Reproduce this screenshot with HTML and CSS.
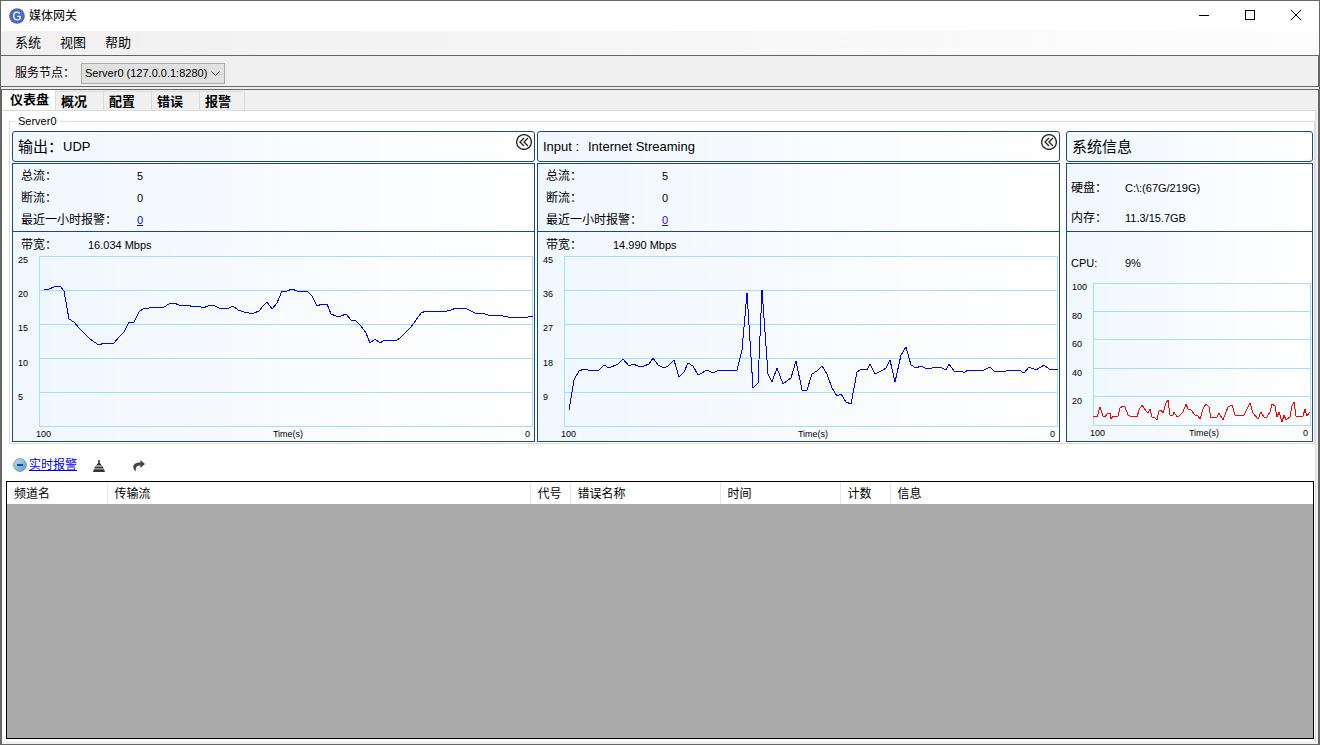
FILE: index.html
```html
<!DOCTYPE html>
<html lang="zh-CN">
<head>
    <meta charset="UTF-8">
    <meta name="viewport" content="width=device-width, initial-scale=1.0">
    <title>媒体网关</title>
    <link rel="stylesheet" href="styles.css">
</head>
<body>

    <header class="titlebar">
        <svg class="logo" viewBox="0 0 16 16">
            <circle cx="8" cy="8" r="7.8" fill="#4a6bc0"/>
            <path d="M10.900 5.600C10.200 4.600 9.200 4.200 8.200 4.200 6 4.200 4.700 5.800 4.700 8S6 11.800 8.200 11.800C9.400 11.800 10.400 11.400 11.100 10.800V8.400H8.400" fill="none" stroke="#fff" stroke-width="1.300"/>
        </svg>
        <h1>媒体网关</h1>
        <div class="window-buttons">
            <button aria-label="最小化"><svg viewBox="0 0 10 10"><path d="M0 5.5h10"/></svg></button>
            <button aria-label="最大化"><svg viewBox="0 0 10 10"><path d="M.5.5h9v9h-9z"/></svg></button>
            <button aria-label="关闭"><svg class="smooth" viewBox="0 0 10 10"><path d="M0 0l10 10M10 0L0 10"/></svg></button>
        </div>
    </header>

    <nav class="menu">
        <button>系统</button>
        <button>视图</button>
        <button>帮助</button>
    </nav>

    <div class="toolbar">
        <label for="node">服务节点：</label>
        <div class="select-box">
            <select id="node">
                <option>Server0 (127.0.0.1:8280)</option>
            </select>
            <svg viewBox="0 0 9 5"><path d="M.5.5l4 4 4-4"/></svg>
        </div>
    </div>

    <div class="workspace">
        <div class="tabs">
            <button class="tab active">仪表盘</button>
            <button class="tab">概况</button>
            <button class="tab">配置</button>
            <button class="tab">错误</button>
            <button class="tab">报警</button>
        </div>

        <main class="page">
            <fieldset class="server">
                <legend>Server0</legend>
                <div class="panels">

                    <section class="panel">
                        <div class="panel-head">
                            <h2>输出：</h2><span>UDP</span>
                            <button class="collapse" aria-label="收起">
                                <svg viewBox="0 0 16 16"><circle cx="8" cy="8" r="7.4"/><path d="M8 4L4 8l4 4M12 4L8 8l4 4"/></svg>
                            </button>
                        </div>
                        <div class="panel-body">
                            <div class="stats">
                                <div class="row"><span>总流：</span><span>5</span></div>
                                <div class="row"><span>断流：</span><span>0</span></div>
                                <div class="row"><span>最近一小时报警：</span><a href="#">0</a></div>
                            </div>
                            <div class="bandwidth"><span>带宽：</span><span>16.034 Mbps</span></div>
                            <div class="chart">
                                <div class="y-axis"><span>25</span><span>20</span><span>15</span><span>10</span><span>5</span></div>
                                <svg class="plot" viewBox="0 0 494 171" preserveAspectRatio="none">
                                    <path class="grid" d="M.5.5h493v170h-493zM0 34.5h494M0 68.5h494M0 102.5h494M0 136.5h494"/>
                                    <polyline class="line" points="5,34 10,33 15,31 21,30 25,35 30,63 35,66 40,72 45,77 50,82 55,86 60,89 65,87 70,88 75,87 80,81 85,76 90,66 95,66 100,56 105,52 110,52 115,51 125,51 130,48 135,47 140,49 149,49 154,51 160,50 164,52 169,50 174,49 180,52 185,53 190,52 194,50 199,54 205,56 210,57 215,57 220,55 224,50 228,46 233,53 238,47 243,35 248,35 253,33 258,35 263,36 268,35 273,40 278,50 283,48 288,48 292,58 297,60 302,60 307,58 312,64 317,65 322,70 327,77 331,87 336,83 341,87 346,84 352,84 357,85 362,81 372,71 377,64 382,57 387,55 392,55 397,56 402,55 408,55 412,54 417,52 422,53 426,52 432,55 436,57 443,57 449,59 459,59 469,61 489,61 494,60"/>
                                </svg>
                            </div>
                            <div class="x-axis"><span>100</span><span>Time(s)</span><span>0</span></div>
                        </div>
                    </section>

                    <section class="panel">
                        <div class="panel-head">
                            <h2>Input :</h2><span>Internet Streaming</span>
                            <button class="collapse" aria-label="收起">
                                <svg viewBox="0 0 16 16"><circle cx="8" cy="8" r="7.4"/><path d="M8 4L4 8l4 4M12 4L8 8l4 4"/></svg>
                            </button>
                        </div>
                        <div class="panel-body">
                            <div class="stats">
                                <div class="row"><span>总流：</span><span>5</span></div>
                                <div class="row"><span>断流：</span><span>0</span></div>
                                <div class="row"><span>最近一小时报警：</span><a class="seen" href="#">0</a></div>
                            </div>
                            <div class="bandwidth"><span>带宽：</span><span>14.990 Mbps</span></div>
                            <div class="chart">
                                <div class="y-axis"><span>45</span><span>36</span><span>27</span><span>18</span><span>9</span></div>
                                <svg class="plot" viewBox="0 0 494 171" preserveAspectRatio="none">
                                    <path class="grid" d="M.5.5h493v170h-493zM0 34.5h494M0 68.5h494M0 102.5h494M0 136.5h494"/>
                                    <polyline class="line" points="5,154 10,124 15,115 20,113 24,114 35,114 40,109 45,112 54,108 59,103 65,110 69,108 74,110 80,110 85,108 89,102 94,109 100,112 104,110 110,104 115,121 120,116 124,107 129,110 134,119 138,117 143,114 149,117 153,115 162,114 173,114 178,94 183,37 189,132 194,127 198,34 204,118 208,126 213,112 219,128 227,122 232,105 238,134 243,134 248,118 253,115 258,110 263,118 268,132 273,140 277,138 282,146 287,148 293,116 298,113 303,114 306,108 311,118 319,114 322,112 326,104 331,126 337,99 342,91 347,109 352,112 357,110 361,112 368,112 371,111 378,112 382,114 385,108 390,115 398,115 400,117 404,114 413,114 418,115 426,111 430,115 442,115 445,114 450,115 455,114 460,117 465,111 472,114 480,109 485,113 494,113"/>
                                </svg>
                            </div>
                            <div class="x-axis"><span>100</span><span>Time(s)</span><span>0</span></div>
                        </div>
                    </section>

                    <section class="panel system">
                        <div class="panel-head"><h2>系统信息</h2></div>
                        <div class="panel-body">
                            <div class="stats">
                                <div class="row"><span>硬盘：</span><span>C:\:(67G/219G)</span></div>
                                <div class="row"><span>内存：</span><span>11.3/15.7GB</span></div>
                            </div>
                            <div class="cpu row"><span>CPU:</span><span>9%</span></div>
                            <div class="chart">
                                <div class="y-axis"><span>100</span><span>80</span><span>60</span><span>40</span><span>20</span></div>
                                <svg class="plot" viewBox="0 0 218 143" preserveAspectRatio="none">
                                    <path class="grid" d="M.5.5h217v142h-217zM0 28.5h218M0 56.5h218M0 85.5h218M0 113.5h218"/>
                                    <polyline class="line red" points="0,133 4,134 7,124 10,133 12,134 15,130 17,130 18,136 20,133 25,133 27,125 30,123 32,124 35,132 39,134 41,133 44,134 46,127 49,122 53,128 55,130 57,126 59,134 62,135 64,137 66,128 68,127 70,130 73,120 75,117 77,132 80,132 81,129 84,134 86,133 90,129 93,121 95,126 98,127 102,132 105,133 107,136 110,126 113,121 116,124 118,135 120,134 124,134 126,130 130,137 133,129 135,124 139,122 142,132 151,132 154,126 157,120 160,130 165,136 168,129 171,134 174,134 177,129 179,121 182,123 184,134 186,129 189,139 191,132 193,137 197,134 199,123 201,119 203,133 210,133 212,126 214,133 217,129"/>
                                </svg>
                            </div>
                            <div class="x-axis"><span>100</span><span>Time(s)</span><span>0</span></div>
                        </div>
                    </section>

                </div>
            </fieldset>

            <div class="alarm-bar">
                <svg class="minus" viewBox="0 0 14 14">
                    <defs>
                        <linearGradient id="ball" x1="0" y1="0" x2="1" y2="1">
                            <stop offset="0" stop-color="#c9e2f5"/>
                            <stop offset="1" stop-color="#4d97d0"/>
                        </linearGradient>
                    </defs>
                    <circle cx="7" cy="7" r="6.4" fill="url(#ball)" stroke="#7f9db5"/>
                    <path d="M4 7h6" stroke="#0d4f8c" stroke-width="2"/>
                </svg>
                <a href="#">实时报警</a>
                <button aria-label="清除">
                    <svg viewBox="0 0 12 12"><path d="M5.2 0h1.6v3l2.4 2.6H2.8L5.2 3zM2.2 6.4h7.6l.9 2H1.3zM.9 9.2h10.2l.9 2.8H0z" fill="#333"/></svg>
                </button>
                <button aria-label="导出">
                    <svg viewBox="0 0 12 12"><path d="M7.4 0L12 4 7.4 8V5.6C4 5.4 2.3 7 2.8 11.6.2 9.4-.6 6.2 1.2 4.2 2.6 2.7 5 2.3 7.4 2.4z" fill="#444"/></svg>
                </button>
            </div>

            <div class="alarm-list">
                <table>
                    <colgroup>
                        <col class="c-name"><col class="c-stream"><col class="c-code"><col class="c-error"><col class="c-time"><col class="c-count"><col>
                    </colgroup>
                    <thead>
                        <tr><th>频道名</th><th>传输流</th><th>代号</th><th>错误名称</th><th>时间</th><th>计数</th><th>信息</th></tr>
                    </thead>
                </table>
            </div>
        </main>
    </div>

</body>
</html>
```

FILE: styles.css
```css
* {
    box-sizing: border-box;
}

body {
    margin: 0;
    min-height: 100vh;
    display: flex;
    flex-direction: column;
    border: 1px solid #666;
    background: #f0f0f0;
    color: #000;
    font-family: "Liberation Sans", "Noto Sans CJK SC", sans-serif;
    font-size: 12px;
    line-height: 16px;
}

button {
    padding: 0;
    border: none;
    background: none;
    color: inherit;
    font: inherit;
}

svg {
    display: block;
    fill: none;
    shape-rendering: crispEdges;
}

h1, h2 {
    margin: 0;
    font-weight: normal;
}

a {
    color: #00f;
}

/* title bar and menu */
.titlebar {
    height: 30px;
    display: flex;
    align-items: center;
    padding-left: 8px;
    background: #fff;
}

.logo {
    width: 16px;
    height: 16px;
    margin-right: 4px;
    shape-rendering: auto;
}

.titlebar h1 {
    font-size: 12px;
}

.window-buttons {
    display: flex;
    align-self: flex-start;
    margin-left: auto;
}

.window-buttons button {
    width: 46px;
    height: 28px;
    display: flex;
    align-items: center;
    justify-content: center;
}

.window-buttons svg {
    width: 10px;
    height: 10px;
    stroke: #000;
}

.window-buttons .smooth {
    shape-rendering: auto;
}

.menu {
    height: 24px;
    display: flex;
    align-items: center;
    gap: 19px;
    padding-left: 14px;
    background: linear-gradient(to right, #f0f0f0, #fdfdfd);
}

.menu button {
    font-size: 13px;
}

.toolbar {
    height: 32px;
    display: flex;
    align-items: center;
    padding: 4px 0 0 14px;
    border: 1px solid #666;
    border-left: none;
    margin-bottom: 2px;
}

.toolbar label {
    width: 66px;
}

.select-box {
    position: relative;
}

.select-box select {
    display: block;
    width: 144px;
    height: 21px;
    padding: 0 3px;
    border: 1px solid #adadad;
    border-radius: 0;
    background: #e1e1e1;
    color: #000;
    font-family: inherit;
    font-size: 11px;
    appearance: none;
}

.select-box svg {
    position: absolute;
    right: 5px;
    top: 8px;
    width: 9px;
    height: 5px;
    stroke: #444;
    shape-rendering: auto;
    pointer-events: none;
}

/* tabs */
.workspace {
    flex: 1;
    display: flex;
    flex-direction: column;
    padding: 0 2px 2px 0;
    border: 1px solid #666;
    border-bottom: none;
}

.tabs {
    height: 20px;
    display: flex;
    align-items: flex-end;
}

.tab {
    width: 48px;
    height: 19px;
    padding: 2px 0 0 5px;
    border: 1px solid #dcdcdc;
    border-left: none;
    border-bottom: none;
    font-size: 13px;
    font-weight: bold;
    text-align: left;
}

.tab:last-child {
    width: 45px;
}

.tab.active {
    width: 54px;
    height: 20px;
    padding: 0 0 0 8px;
    border-top: none;
    background: #fff;
}

.page {
    flex: 1;
    display: flex;
    flex-direction: column;
    padding: 5px 0 3px 4px;
    border-top: 1px solid #dcdcdc;
    border-right: 1px solid #dcdcdc;
    background: #fff;
}

.server {
    min-width: 0;
    margin: 0 0 0 3px;
    padding: 0 1px 1px 2px;
    border: 1px solid #dcdcdc;
}

.server legend {
    margin-left: 3px;
    padding: 0 3px;
    font-size: 11px;
    line-height: 11px;
}

/* panels */
.panels {
    display: flex;
    gap: 2px;
    padding-top: 4px;
}

.panel {
    flex: 523 1 0;
    min-width: 0;
    display: flex;
    flex-direction: column;
    gap: 1px;
}

.panel.system {
    flex-grow: 247;
    margin-left: 4px;
}

.panel-head,
.panel-body {
    border: 1px solid #1f4788;
    background: linear-gradient(to right, #f0f7ff, #fff);
}

.panel-head {
    height: 31px;
    display: flex;
    align-items: center;
    padding: 0 2px 0 5px;
    border-radius: 3px;
    font-size: 13px;
}

.panel-head h2 {
    min-width: 45px;
    font-size: 15px;
}

.panel:nth-child(2) h2 {
    font-size: 13px;
}

.collapse {
    align-self: flex-start;
    margin: 2px 0 0 auto;
}

.collapse svg {
    width: 16px;
    height: 16px;
    stroke: #222;
    stroke-width: 1.3;
    shape-rendering: auto;
}

.panel-body {
    flex: 1;
    font-size: 11px;
}

.stats {
    padding-top: 1px;
    border-bottom: 1px solid #1f4788;
}

.row,
.bandwidth {
    height: 22px;
    display: flex;
    align-items: center;
    padding-left: 8px;
}

.row span:first-child,
.bandwidth span:first-child {
    width: 116px;
    font-size: 12px;
}

.seen {
    color: #3c00c8;
}

.bandwidth {
    height: 24px;
    padding-top: 1px;
}

.bandwidth span:first-child {
    width: 67px;
}

.system .stats {
    display: flex;
    flex-direction: column;
    gap: 10px;
    padding: 14px 0 3px;
}

.system .row {
    height: 20px;
    padding-left: 4px;
}

.system .row span:first-child {
    width: 54px;
}

.system .cpu {
    margin: 21px 0 10px;
}

.system .cpu span:first-child {
    font-size: 11px;
}

/* charts */
.chart {
    height: 171px;
    display: flex;
    padding-right: 1px;
}

.system .chart {
    height: 143px;
}

.y-axis {
    width: 26px;
    display: flex;
    flex-direction: column;
    padding-left: 5px;
    font-size: 9px;
    line-height: 9px;
}

.y-axis span {
    flex: 1;
}

.plot {
    flex: 1;
    min-width: 0;
    height: 100%;
}

.grid {
    stroke: #a6dcff;
    vector-effect: non-scaling-stroke;
}

.line {
    stroke: #00f;
    vector-effect: non-scaling-stroke;
}

.line.red {
    stroke: #f00;
}

.x-axis {
    display: flex;
    justify-content: space-between;
    padding: 0 4px 0 23px;
    font-size: 9px;
    line-height: 14px;
}

/* alarms */
.alarm-bar {
    height: 37px;
    display: flex;
    align-items: center;
    padding: 4px 0 0 7px;
}

.alarm-bar .minus {
    width: 14px;
    height: 14px;
    margin-right: 2px;
    shape-rendering: auto;
}

.alarm-bar button {
    margin: 3px 12px 0 16px;
}

.alarm-bar button svg {
    width: 12px;
    height: 12px;
    shape-rendering: auto;
}

.alarm-list {
    flex: 1;
    margin-right: 1px;
    border: 1px solid #000;
    background: #ababab;
}

.alarm-list table {
    width: 100%;
    border-collapse: collapse;
    table-layout: fixed;
    background: #fff;
}

.alarm-list th {
    height: 22px;
    padding: 2px 0 0 7px;
    border-right: 1px solid #e5e5e5;
    font-size: 12px;
    font-weight: normal;
    text-align: left;
}

.alarm-list th:last-child {
    border-right: none;
}

.c-name { width: 100px; }
.c-stream { width: 423px; }
.c-code { width: 40px; }
.c-error { width: 150px; }
.c-time { width: 120px; }
.c-count { width: 50px; }
```
